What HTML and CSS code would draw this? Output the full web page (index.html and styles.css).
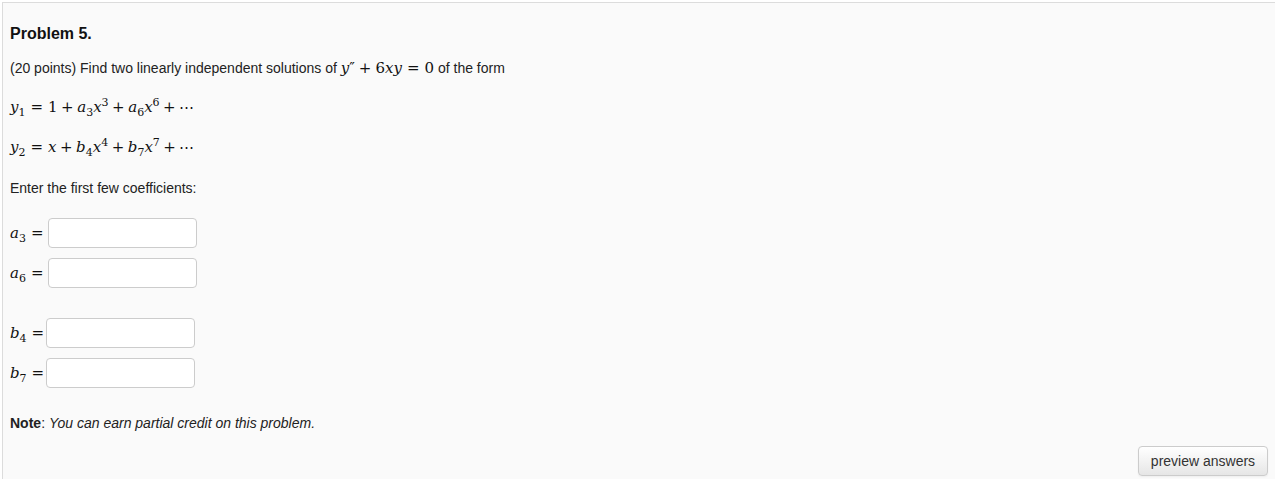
FILE: index.html
```html
<!DOCTYPE html>
<html>
<head>
<meta charset="utf-8">
<link rel="stylesheet" href="styles.css">
</head>
<body>
<div class="problem">
  <h2 class="title">Problem 5.</h2>
  <p class="text">(20 points) Find two linearly independent solutions of <span class="m"><i>y</i>″<span class="op">+</span>6<i>xy</i><span class="rel">=</span>0</span> of the form</p>
  <p class="eq"><span class="m"><i>y</i><sub>1</sub><span class="rel">=</span>1<span class="op">+</span><i>a</i><sub>3</sub><i>x</i><sup>3</sup><span class="op">+</span><i>a</i><sub>6</sub><i>x</i><sup>6</sup><span class="op">+</span>⋯</span></p>
  <p class="eq"><span class="m"><i>y</i><sub>2</sub><span class="rel">=</span><i>x</i><span class="op">+</span><i>b</i><sub>4</sub><i>x</i><sup>4</sup><span class="op">+</span><i>b</i><sub>7</sub><i>x</i><sup>7</sup><span class="op">+</span>⋯</span></p>
  <p class="text lead">Enter the first few coefficients:</p>
  <div class="answers">
    <div class="row"><span class="m lab wide"><i>a</i><sub>3</sub><span class="rel">=</span></span><input class="box" type="text"></div>
    <div class="row"><span class="m lab wide"><i>a</i><sub>6</sub><span class="rel">=</span></span><input class="box" type="text"></div>
    <div class="row gap"><span class="m lab"><i>b</i><sub>4</sub><span class="rel">=</span></span><input class="box" type="text"></div>
    <div class="row"><span class="m lab"><i>b</i><sub>7</sub><span class="rel">=</span></span><input class="box" type="text"></div>
  </div>
  <p class="text note"><b>Note</b>: <em>You can earn partial credit on this problem.</em></p>
  <div class="actions"><button class="btn">preview answers</button></div>
</div>
</body>
</html>
```
FILE: styles.css
```css
html, body { margin: 0; padding: 0; background: #fff; overflow: hidden; }
body { font-family: "Liberation Sans", Arial, sans-serif; color: #222; }
.problem {
  margin: 2px 0 0 2px;
  border-top: 1px solid #dcdcdc;
  border-left: 1px solid #dcdcdc;
  background: #fafafa;
  padding: 21px 7px 10px 7px;
  min-height: 480px;
  box-sizing: border-box;
}
.title { font-size: 16px; font-weight: bold; margin: 0 0 14px 0; color: #111; line-height: 20px; }
.text { font-size: 14px; margin: 0; line-height: 20px; color: #222; }
.eq { margin: 18px 0 0 0; line-height: 22px; }
.eq + .text.lead { margin-top: 20px; }
.m { font-family: "DejaVu Serif", "Liberation Serif", serif; font-size: 15px; color: #111; white-space: nowrap; }
.m i { font-style: italic; }
.m sub, .m sup { font-size: 11px; line-height: 0; }
.op { margin: 0 4px; }
.rel { margin: 0 5px; }
.eq .op { margin: 0 3.5px; }
.answers { margin-top: 20px; display: flex; flex-direction: column; gap: 10px; }
.row { display: flex; align-items: center; }
.row.gap { margin-top: 20px; }
.lab .rel { margin-right: 2px; }
.lab.wide .rel { margin-right: 4px; }
.box {
  width: 149px; height: 30px; box-sizing: border-box;
  border: 1px solid #ccc; border-radius: 4px; background: #fff; margin: 0;
}
.note { margin-top: 25px; }
.note em { font-style: italic; }
.actions { display: flex; justify-content: flex-end; margin-top: 13px; }
.btn {
  font-family: "Liberation Sans", Arial, sans-serif; font-size: 14px; color: #333;
  width: 130px; height: 30px; border: 1px solid #ccc; border-radius: 4px;
  background: linear-gradient(#ffffff, #e6e6e6); box-shadow: 0 1px 2px rgba(0,0,0,0.05);
  padding: 0;
}
```
